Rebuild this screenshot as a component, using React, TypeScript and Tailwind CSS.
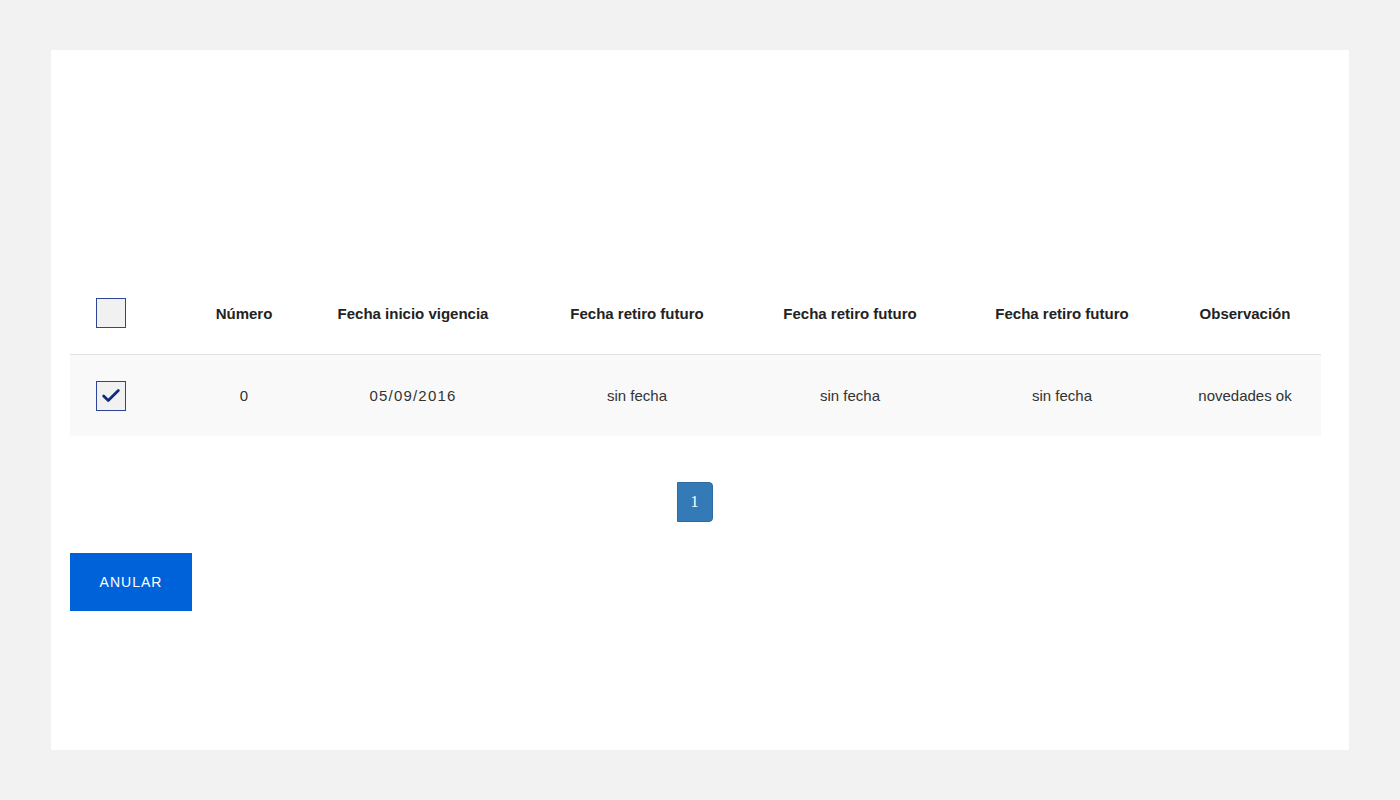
import { Check } from "lucide-react";

const cols = [
  "Número",
  "Fecha inicio vigencia",
  "Fecha retiro futuro",
  "Fecha retiro futuro",
  "Fecha retiro futuro",
  "Observación",
];

const row = ["0", "05/09/2016", "sin fecha", "sin fecha", "sin fecha", "novedades ok"];

const grid =
  "grid grid-cols-[82px_184px_154px_294px_132px_292px_74px_39px] items-center";

function Box({ checked }: { checked?: boolean }) {
  return (
    <div className="w-[30px] h-[30px] border border-[#2c4597] bg-[#f1f1f1] flex items-center justify-center">
      {checked && <Check className="w-[22px] h-[22px] text-[#0f2b7c]" strokeWidth={3} />}
    </div>
  );
}

export default function App() {
  return (
    <div className="min-h-screen bg-[#f2f2f2] pt-[50px] pl-[51px] font-['Liberation_Sans',Arial,sans-serif]">
      <div className="w-[1298px] h-[700px] bg-white pl-[19px] pr-[28px] pt-[222px]">
        <div className={`${grid} h-[83px] border-b border-[#e2e2e2]`}>
          <div className="flex justify-center">
            <Box />
          </div>
          {cols.map((c, i) => (
            <div key={i} className="flex justify-center whitespace-nowrap pt-[2px] text-[15px] font-bold text-[#222]">
              {c}
            </div>
          ))}
        </div>
        <div className={`${grid} h-[81px] bg-[#f9f9f9]`}>
          <div className="flex justify-center">
            <Box checked />
          </div>
          {row.map((c, i) => (
            <div
              key={i}
              className={`flex justify-center whitespace-nowrap pt-[2px] text-[15px] text-[#333] ${i === 1 ? "tracking-[1.2px]" : ""}`}
            >
              {c}
            </div>
          ))}
        </div>
        <div className="flex justify-center mt-[46px] pr-[2px]">
          <button className="w-[36px] h-[40px] bg-[#337ab7] border border-[#2e6da4] rounded-r-[4px] text-white text-[16px] font-['Liberation_Serif',serif]">
            1
          </button>
        </div>
        <button className="mt-[31px] w-[122px] h-[58px] bg-[#0062d9] text-white text-[14px] tracking-[1px]">
          ANULAR
        </button>
      </div>
    </div>
  );
}
